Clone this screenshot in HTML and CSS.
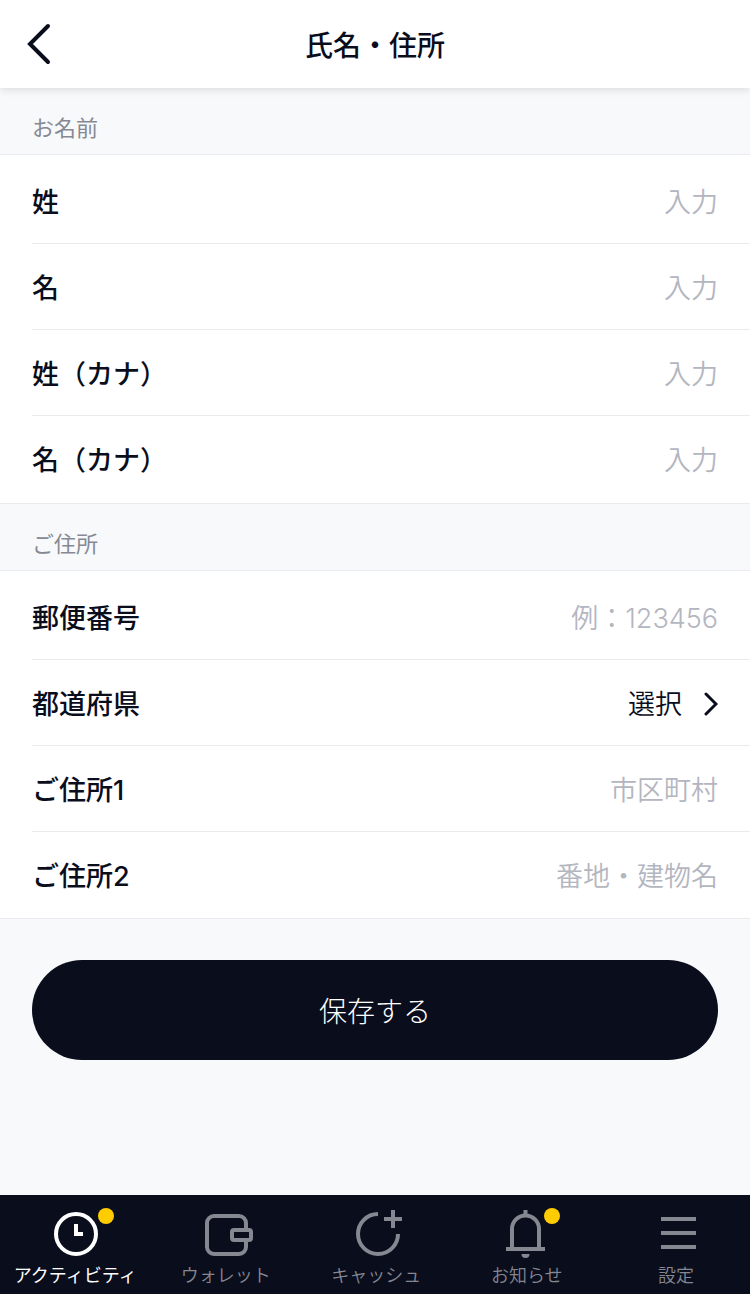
FILE: index.html
```html
<!DOCTYPE html>
<html lang="ja">
<head>
    <meta charset="UTF-8">
    <meta name="viewport" content="width=device-width, initial-scale=1">
    <title>氏名・住所</title>
    <link rel="stylesheet" href="styles.css">
</head>
<body>

<header class="header">
    <button class="back" type="button" aria-label="戻る">
        <svg width="24" height="42" viewBox="0 0 24 42">
            <path d="M21 3 L3 21 L21 39" fill="none" stroke="currentColor" stroke-width="4" stroke-linecap="round"/>
        </svg>
    </button>
    <h1 class="title">氏名・住所</h1>
</header>

<main class="main">
    <form>
        <h2 class="section-title">お名前</h2>
        <div class="fields fields-name">
            <div class="row">
                <label for="lastName">姓</label>
                <input type="text" id="lastName" placeholder="入力">
            </div>
            <div class="row">
                <label for="firstName">名</label>
                <input type="text" id="firstName" placeholder="入力">
            </div>
            <div class="row">
                <label for="lastNameKana">姓（カナ）</label>
                <input type="text" id="lastNameKana" placeholder="入力">
            </div>
            <div class="row">
                <label for="firstNameKana">名（カナ）</label>
                <input type="text" id="firstNameKana" placeholder="入力">
            </div>
        </div>

        <h2 class="section-title">ご住所</h2>
        <div class="fields">
            <div class="row">
                <label for="zip">郵便番号</label>
                <input type="text" id="zip" placeholder="例：123456">
            </div>
            <div class="row">
                <label for="prefecture">都道府県</label>
                <select id="prefecture">
                    <option>選択</option>
                </select>
                <svg class="chevron" width="16" height="28" viewBox="0 0 16 28">
                    <path d="M4 5 L14 15 L4 25" fill="none" stroke="currentColor" stroke-width="3" stroke-linecap="round"/>
                </svg>
            </div>
            <div class="row">
                <label for="address1">ご住所1</label>
                <input type="text" id="address1" placeholder="市区町村">
            </div>
            <div class="row">
                <label for="address2">ご住所2</label>
                <input type="text" id="address2" placeholder="番地・建物名">
            </div>
        </div>

        <div class="actions">
            <button class="btn" type="submit">保存する</button>
        </div>
    </form>
</main>

<nav class="tabs">
    <a class="tab active" href="#">
        <svg width="80" height="52" viewBox="0 0 80 52">
            <circle cx="41" cy="27" r="20" fill="none" stroke="currentColor" stroke-width="4"/>
            <path d="M41 17 V27 H48" fill="none" stroke="currentColor" stroke-width="4"/>
            <circle class="badge" cx="71" cy="9" r="8"/>
        </svg>
        <span>アクティビティ</span>
    </a>
    <a class="tab" href="#">
        <svg width="80" height="52" viewBox="0 0 80 52">
            <rect x="21" y="9" width="39" height="38" rx="7" fill="none" stroke="currentColor" stroke-width="4"/>
            <rect class="clasp" x="46" y="23" width="19" height="10" rx="2" stroke="currentColor" stroke-width="4"/>
        </svg>
        <span>ウォレット</span>
    </a>
    <a class="tab" href="#">
        <svg width="80" height="52" viewBox="0 0 80 52">
            <path d="M42 7 A20 20 0 1 0 62 27" fill="none" stroke="currentColor" stroke-width="4"/>
            <path d="M57 3 V21 M48 12 H66" stroke="currentColor" stroke-width="4"/>
        </svg>
        <span>キャッシュ</span>
    </a>
    <a class="tab" href="#">
        <svg width="80" height="52" viewBox="0 0 80 52">
            <path d="M25 41 V22 A13.5 13.5 0 0 1 52 22 V41" fill="none" stroke="currentColor" stroke-width="4"/>
            <path d="M38.5 3 V9 M19 42 H58" stroke="currentColor" stroke-width="4"/>
            <path d="M34.5 47 H42.5 A4 4 0 0 1 34.5 47 Z" fill="currentColor"/>
            <circle class="badge" cx="65" cy="9" r="8"/>
        </svg>
        <span>お知らせ</span>
    </a>
    <a class="tab" href="#">
        <svg width="80" height="52" viewBox="0 0 80 52">
            <path d="M25 12 H60 M25 26 H60 M25 40 H60" stroke="currentColor" stroke-width="4"/>
        </svg>
        <span>設定</span>
    </a>
</nav>

</body>
</html>
```
FILE: styles.css
```css
* {
    box-sizing: border-box;
}
body {
    display: flex;
    flex-direction: column;
    min-height: 100vh;
    margin: 0;
    font-family: Inter, "Noto Sans CJK JP", sans-serif;
    font-size: 27px;
    color: #0a0d1c;
    background: #f7f9fb;
}
.header {
    display: grid;
    grid-template-columns: 1fr auto 1fr;
    align-items: center;
    height: 88px;
    padding: 0 27px;
    background: white;
    box-shadow: 0 2px 8px rgba(0, 0, 0, 0.12);
}
.back {
    justify-self: start;
    padding: 0;
    border: none;
    background: none;
    color: inherit;
    cursor: pointer;
}
.back svg {
    display: block;
}
.title {
    margin: 0;
    font-size: 28px;
    font-weight: 500;
}
.main {
    flex: 1;
}
.section-title {
    height: 66px;
    margin: 0;
    padding: 14px 32px 0;
    font-size: 22px;
    font-weight: 400;
    line-height: 52px;
    color: #868993;
}
.fields {
    padding: 3px 0 0 32px;
    border-top: 1px solid #e9ebee;
    border-bottom: 1px solid #e9ebee;
    background: white;
}
.fields-name {
    padding-bottom: 1px;
}
.row {
    display: flex;
    align-items: center;
    height: 86px;
    padding-right: 32px;
    border-bottom: 1px solid #e9ebee;
}
.row:last-child {
    border-bottom-color: transparent;
}
.row label {
    font-weight: 500;
}
.row input, .row select {
    flex: 1;
    min-width: 0;
    height: 60px;
    padding: 4px 0 0;
    border: none;
    outline: none;
    background: none;
    font: inherit;
    font-weight: 350;
    color: inherit;
    text-align: right;
}
.row input::placeholder {
    color: #b4b6bf;
    opacity: 1;
}
.row select {
    appearance: none;
    text-align-last: right;
}
.chevron {
    margin-left: 20px;
}
.actions {
    padding: 41px 32px;
}
.btn {
    width: 100%;
    height: 100px;
    border: none;
    border-radius: 50px;
    background: #0a0d1c;
    color: white;
    font: inherit;
    font-size: 28px;
    font-weight: 300;
    cursor: pointer;
}
.tabs {
    display: grid;
    grid-template-columns: repeat(4, 1fr) 148px;
    height: 99px;
    padding-top: 12px;
    background: #0a0d1c;
}
.tab {
    display: flex;
    flex-direction: column;
    align-items: center;
    gap: 4px;
    color: #858791;
    font-size: 18px;
    font-weight: 350;
    line-height: 26px;
    text-decoration: none;
    white-space: nowrap;
}
.tab.active {
    color: white;
    font-weight: 400;
}
.badge {
    fill: #ffcc00;
}
.clasp {
    fill: #0a0d1c;
}
```
